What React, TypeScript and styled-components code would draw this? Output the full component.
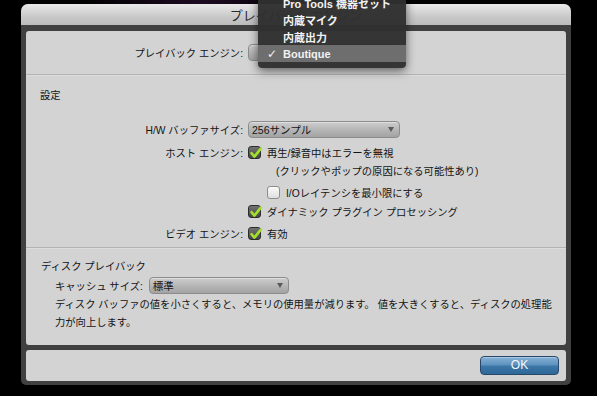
import React from "react";
import styled, { createGlobalStyle } from "styled-components";

const GlobalStyle = createGlobalStyle`
  html, body {
    margin: 0;
    padding: 0;
    background: #000;
  }
  body {
    font-family: "Liberation Sans", "Noto Sans CJK JP", sans-serif;
    -webkit-font-smoothing: antialiased;
  }
`;

const Screen = styled.div`
  position: relative;
  width: 597px;
  height: 396px;
  overflow: hidden;
  box-sizing: border-box;
  padding: 4px 0 0 21px;
  background:
    radial-gradient(ellipse 120px 18px at 200px 2px, #1d0b22 0%, rgba(0, 0, 0, 0) 100%),
    #000;
`;

const Window = styled.div`
  width: 550px;
  height: 381px;
  display: flex;
  flex-direction: column;
  background: #404040;
  border-radius: 7px 7px 5px 5px;
  overflow: hidden;
`;

const TitleBar = styled.div`
  height: 21px;
  flex: none;
  display: flex;
  align-items: center;
  justify-content: center;
  background: linear-gradient(#e9e9e9, #c9c9c9 60%, #bcbcbc);
  color: #2b2b2b;
  font-size: 13px;
  font-family: "Noto Sans CJK JP", sans-serif;
`;

const Body = styled.div`
  flex: 1;
  display: flex;
  flex-direction: column;
  gap: 5px;
  padding: 6px 5px 4px 5px;
`;

const Panel = styled.div`
  background: #d3d3d3;
  border-radius: 3px;
  color: #141414;
  font-size: 10.3px;
`;

const MainPanel = styled(Panel)`
  height: 314px;
  display: flex;
  flex-direction: column;
`;

const Separator = styled.div`
  height: 1px;
  background: #b3b3b3;
  border-bottom: 1px solid #dcdcdc;
  flex: none;
`;

const EngineSection = styled.div`
  height: 43px;
  display: flex;
  align-items: center;
`;

const SettingsSection = styled.div`
  padding: 13px 0 6px 0;
`;

const SectionTitle = styled.div<{ $indent: number }>`
  padding-left: ${(p) => p.$indent}px;
  line-height: 14px;
`;

const Row = styled.div<{ $mt: number }>`
  display: flex;
  align-items: center;
  margin-top: ${(p) => p.$mt}px;
  min-height: 14px;
`;

const Label = styled.div`
  width: 222px;
  flex: none;
  text-align: right;
  padding-right: 5px;
  box-sizing: border-box;
  white-space: nowrap;
`;

const Control = styled.div<{ $indent?: number }>`
  display: flex;
  align-items: center;
  gap: 6px;
  padding-left: ${(p) => p.$indent ?? 0}px;
  white-space: nowrap;
`;

const Popup = styled.div<{ $width: number }>`
  position: relative;
  width: ${(p) => p.$width}px;
  height: 17px;
  box-sizing: border-box;
  border: 1px solid #8c8c8c;
  border-radius: 4px;
  background: linear-gradient(#cdcdcd, #b4b4b4 55%, #a3a3a3);
  display: flex;
  align-items: center;
  padding-left: 3px;
  font-size: 10.5px;
  color: #151515;
  box-shadow: inset 0 1px 0 rgba(255, 255, 255, 0.35);

  &::after {
    content: "";
    position: absolute;
    right: 5px;
    top: 5px;
    border-left: 3.5px solid transparent;
    border-right: 3.5px solid transparent;
    border-top: 5px solid #5a5a5a;
  }
`;

const Box = styled.span<{ $checked: boolean }>`
  position: relative;
  width: 13px;
  height: 13px;
  flex: none;
  box-sizing: border-box;
  border-radius: 3px;
  border: 1px solid ${(p) => (p.$checked ? "#2c2c2c" : "#8d8d8d")};
  background: ${(p) =>
    p.$checked
      ? "linear-gradient(#727272, #454545)"
      : "linear-gradient(#fbfbfb, #dedede)"};

  svg {
    position: absolute;
    left: 0px;
    top: -1px;
  }
`;

const SubNote = styled.div`
  padding-left: 250px;
  margin-top: 3px;
  white-space: nowrap;
`;

const DiskSection = styled.div`
  padding: 11px 0 0 0;
`;

const CacheRow = styled.div`
  display: flex;
  align-items: center;
  gap: 6px;
  padding-left: 29px;
  margin-top: 3px;
`;

const Description = styled.div`
  padding-left: 29px;
  margin-top: 2px;
  line-height: 18px;
  white-space: nowrap;
`;

const ButtonPanel = styled(Panel)`
  height: 31px;
  display: flex;
  align-items: center;
  justify-content: flex-end;
  padding-right: 7px;
`;

const OkButton = styled.button`
  width: 79px;
  height: 19px;
  margin-top: -1px;
  border: 1px solid #274868;
  border-radius: 4px;
  background: linear-gradient(#86b1d4, #5f93bf 45%, #3b76a6 55%, #2e6898);
  color: #f4f8fb;
  font-family: "Liberation Sans", sans-serif;
  font-size: 12px;
  padding: 0;
  box-shadow: inset 0 1px 0 rgba(255, 255, 255, 0.3);
`;

const Menu = styled.div`
  position: absolute;
  left: 258px;
  top: -6px;
  width: 148px;
  padding-bottom: 6px;
  background: rgba(48, 48, 48, 0.97);
  box-shadow: 0 3px 10px rgba(0, 0, 0, 0.55);
  border-radius: 0 0 4px 4px;
  z-index: 10;
`;

const MenuItem = styled.div<{ $active?: boolean }>`
  position: relative;
  height: 17px;
  display: flex;
  align-items: center;
  padding-left: 25px;
  background: ${(p) => (p.$active ? "#6e6e6e" : "transparent")};
  color: #f2f2f2;
  font-weight: bold;
  font-size: 11px;
  white-space: nowrap;
`;

const Check = styled.span`
  position: absolute;
  left: 9px;
  font-family: "DejaVu Sans", sans-serif;
  font-size: 12px;
  font-weight: bold;
`;

const CheckBox = ({ checked }: { checked: boolean }) => (
  <Box $checked={checked}>
    {checked && (
      <svg width="14" height="14" viewBox="0 0 14 14">
        <path
          d="M2.5 7.2 L5.4 10.6 L11.8 2.6"
          fill="none"
          stroke="#a3e02c"
          strokeWidth="2.6"
          strokeLinecap="round"
          strokeLinejoin="round"
        />
      </svg>
    )}
  </Box>
);

const menuItems = ["Pro Tools 機器セット", "内蔵マイク", "内蔵出力", "Boutique"];

export default function App() {
  return (
    <>
      <GlobalStyle />
      <Screen>
        <Window>
          <TitleBar>プレイバック エンジン</TitleBar>
          <Body>
            <MainPanel>
              <EngineSection>
                <Label>プレイバック エンジン:</Label>
                <Control>
                  <Popup $width={150} />
                </Control>
              </EngineSection>
              <Separator />
              <SettingsSection>
                <SectionTitle $indent={14}>設定</SectionTitle>
                <Row $mt={18}>
                  <Label>H/W バッファサイズ:</Label>
                  <Control>
                    <Popup $width={152}>256サンプル</Popup>
                  </Control>
                </Row>
                <Row $mt={7}>
                  <Label>ホスト エンジン:</Label>
                  <Control>
                    <CheckBox checked />
                    再生/録音中はエラーを無視
                  </Control>
                </Row>
                <SubNote>(クリックやポップの原因になる可能性あり)</SubNote>
                <Row $mt={7}>
                  <Label />
                  <Control $indent={19}>
                    <CheckBox checked={false} />
                    I/Oレイテンシを最小限にする
                  </Control>
                </Row>
                <Row $mt={4}>
                  <Label />
                  <Control>
                    <CheckBox checked />
                    ダイナミック プラグイン プロセッシング
                  </Control>
                </Row>
                <Row $mt={7}>
                  <Label>ビデオ エンジン:</Label>
                  <Control>
                    <CheckBox checked />
                    有効
                  </Control>
                </Row>
              </SettingsSection>
              <Separator />
              <DiskSection>
                <SectionTitle $indent={15}>ディスク プレイバック</SectionTitle>
                <CacheRow>
                  <span>キャッシュ サイズ:</span>
                  <Popup $width={140}>標準</Popup>
                </CacheRow>
                <Description>
                  ディスク バッファの値を小さくすると、メモリの使用量が減ります。 値を大きくすると、ディスクの処理能
                  <br />
                  力が向上します。
                </Description>
              </DiskSection>
            </MainPanel>
            <ButtonPanel>
              <OkButton>OK</OkButton>
            </ButtonPanel>
          </Body>
        </Window>
        <Menu>
          {menuItems.map((item) => (
            <MenuItem key={item} $active={item === "Boutique"}>
              {item === "Boutique" && <Check>✓</Check>}
              {item}
            </MenuItem>
          ))}
        </Menu>
      </Screen>
    </>
  );
}
